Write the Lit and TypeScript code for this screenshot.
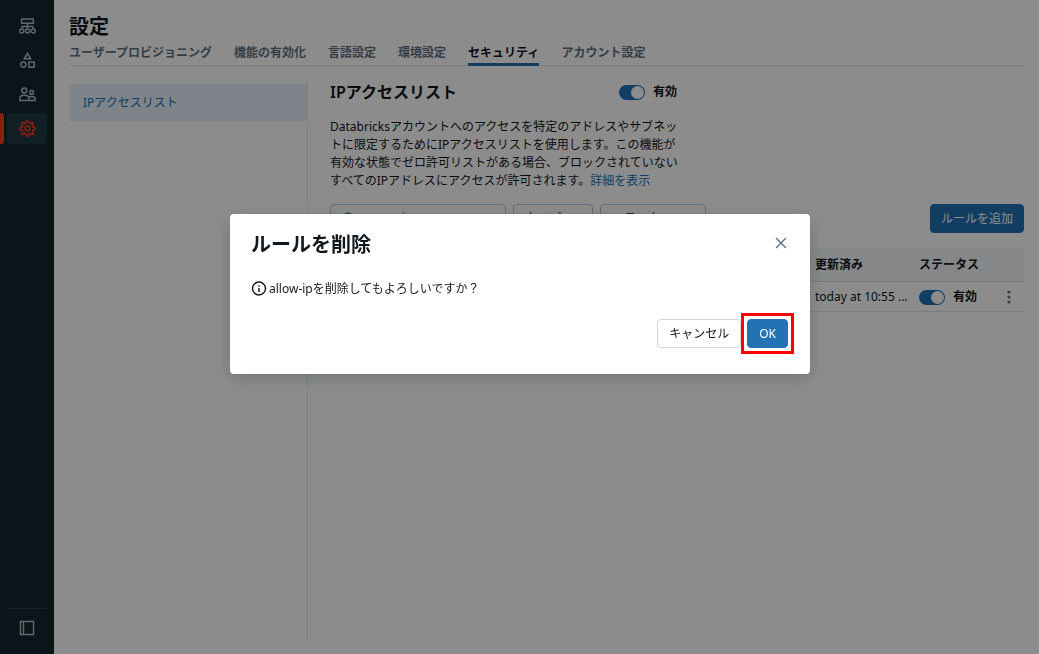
import { LitElement, html, css, svg } from "lit";
import { customElement, state } from "lit/decorators.js";

const TABS = ["ユーザープロビジョニング", "機能の有効化", "言語設定", "環境設定", "セキュリティ", "アカウント設定"];

const NAV = [
  {
    label: "ワークスペース",
    icon: svg`<path d="M2.500 1h11v4h-11zM8 5v5M3 10.200V8h10v2.200"/><circle cx="2.600" cy="12.200" r="1.900"/><circle cx="8" cy="12.200" r="1.900"/><circle cx="13.400" cy="12.200" r="1.900"/>`,
  },
  {
    label: "カタログ",
    icon: svg`<path d="M8 1.200l3 5.200H5zM9.300 9.300h5v5h-5z"/><circle cx="4.100" cy="11.800" r="2.500"/>`,
  },
  {
    label: "ユーザー",
    icon: svg`<circle cx="5" cy="4.200" r="2.300"/><circle cx="11.900" cy="6" r="1.700"/><path d="M.8 13.600v-2.200c0-1.600 1.800-2.600 4.200-2.600s4.200 1 4.200 2.600v2.200zM9.200 13.600h6v-1.400c0-1.400-1.300-2.300-3.200-2.300-1.300 0-2.300.4-2.900 1"/>`,
  },
  {
    label: "設定",
    icon: svg`<path stroke-linejoin="round" d="M6.630 2.890 6.960.870 9.040.870 9.370 2.890 10.650 3.410 12.310 2.220 13.780 3.690 12.590 5.350 13.110 6.630 15.130 6.960 15.130 9.040 13.110 9.370 12.590 10.650 13.780 12.310 12.310 13.780 10.650 12.590 9.370 13.110 9.040 15.130 6.960 15.130 6.630 13.110 5.350 12.590 3.690 13.780 2.220 12.310 3.410 10.650 2.890 9.370.870 9.040.870 6.960 2.890 6.630 3.410 5.350 2.220 3.690 3.690 2.220 5.350 3.410z"/><circle cx="8" cy="8" r="2.300"/>`,
  },
];

@customElement("toggle-switch")
class ToggleSwitch extends LitElement {
  static styles = css`
    :host { display: flex; }
    label { display: flex; align-items: center; gap: 8px; font-weight: 600; font-size: 12px; line-height: 18px; }
    input {
      appearance: none; box-sizing: border-box; margin: 0; width: 26px; height: 15px; border-radius: 8px;
      background: #2272b4; display: flex; justify-content: flex-end; padding: 1px;
    }
    input::before { content: ""; width: 13px; height: 13px; border-radius: 50%; background: #fff; }
    input:not(:checked) { justify-content: flex-start; background: #8396a5; }
  `;
  render() {
    return html`<label><input type="checkbox" role="switch" checked />有効</label>`;
  }
}

@customElement("app-root")
class AppRoot extends LitElement {
  @state() private open = true;

  static styles = css`
    :host {
      display: block; font-family: "Noto Sans", "Noto Sans CJK JP", sans-serif;
      font-size: 12px; line-height: 18px; color: #11171c; background: #fff;
    }
    * { box-sizing: border-box; }
    button, input { font: inherit; color: inherit; }
    button { cursor: pointer; }
    h1, h2, p { margin: 0; }
    a { text-decoration: none; color: #2272b4; }
    svg { fill: none; stroke: currentColor; stroke-width: 1.4; display: block; }
    .page { display: flex; min-height: 100vh; }
    .side {
      flex: none; width: 54px; background: #11272e; color: #b4bec4; padding: 11px 7px 18px;
      display: flex; flex-direction: column; gap: 3px;
    }
    .item { display: grid; grid-template-columns: 4px 1fr; gap: 3px; margin-left: -7px; }
    .mark { border-radius: 0 3px 3px 0; }
    .nav { height: 31px; border-radius: 4px; display: grid; place-items: center; color: inherit; }
    .item.on .nav { background: #223a42; color: #ff3621; }
    .item.on .mark { background: #ff3621; }
    .foot { margin-top: auto; border-top: 1px solid #344346; padding-top: 11px; }
    .collapse { border: 0; background: none; padding: 0; width: 100%; display: grid; place-items: center; }
    .main { flex: 1; min-width: 0; padding: 15px 15px 14px; display: flex; flex-direction: column; }
    h1 { font-size: 20px; line-height: 24px; font-weight: 600; }
    .tabs { display: flex; gap: 22px; border-bottom: 1px solid #e0e6ea; margin-top: 5px; }
    .tab { color: #5f7281; font-weight: 600; height: 22px; margin-bottom: -1px; white-space: nowrap; }
    .tab.on { color: #11171c; border-bottom: 3px solid #2272b4; }
    .body { flex: 1; display: flex; margin-top: 14px; }
    .menu { width: 239px; flex: none; border-right: 1px solid #e8ecf0; padding-top: 4px; }
    .menu a { display: block; background: #e6f1f9; padding: 10px 14px 9px; }
    .content { flex: 1; min-width: 0; padding-left: 22px; }
    .head { display: flex; justify-content: space-between; align-items: center; width: 347px; }
    h2 { font-size: 16px; line-height: 24px; font-weight: 600; }
    .desc { max-width: 352px; margin-top: 14px; }
    .tools { display: flex; gap: 7px; margin-top: 14px; }
    .search {
      width: 176px; display: flex; align-items: center; gap: 6px; padding: 0 11px;
      border: 1px solid #b9cbdb; border-radius: 4px; height: 29px; color: #5f7281;
    }
    .search svg { flex: none; }
    .search input { border: 0; background: none; padding: 0; width: 100%; min-width: 0; outline: 0; }
    .search input::placeholder { color: #5f7281; opacity: 1; }
    .btn { height: 29px; border-radius: 4px; padding: 1px 11px 0; border: 1px solid #cbd8e3; background: #fff; white-space: nowrap; }
    .btn.primary { background: #2272b4; border-color: #2272b4; color: #fff; }
    .filter { display: flex; align-items: center; justify-content: space-between; border-color: #b9cbdb; }
    .type { width: 80px; }
    .status { width: 106px; }
    .add { margin-left: auto; padding: 1px 10px 0; }
    table { width: 100%; border-collapse: collapse; table-layout: fixed; margin-top: 15px; }
    th { text-align: left; height: 33px; background: #f4f7fa; font-weight: 600; padding: 2px 0 0; }
    td { height: 30px; padding: 2px 0 0; white-space: nowrap; }
    th, td { border-bottom: 1px solid #dce3e9; }
    .c2 { width: 104px; }
    .c3 { width: 83px; }
    .c4 { width: 22px; }
    .more { border: 0; background: none; padding: 0; color: #5f7281; display: block; }
    .more svg { fill: currentColor; stroke: none; }
    .mask { position: fixed; inset: 0; background: rgba(0, 0, 0, 0.45); padding: 214px 0 0 1px; }
    .modal {
      width: 580px; max-width: 100%; margin: 0 auto; background: #fff; border-radius: 4px;
      padding: 19px 22px 20px 21px; box-shadow: 0 4px 16px rgba(27, 49, 57, 0.25);
    }
    .mhead { display: flex; justify-content: space-between; align-items: flex-start; }
    .mhead h2 { font-size: 20px; }
    .close { border: 0; background: none; padding: 3px 0; color: #5f7281; }
    .msg { display: flex; align-items: center; gap: 2px; margin-top: 23px; }
    .acts { display: flex; justify-content: flex-end; align-items: center; margin: 15px -6px 0 0; }
    .ring { border: 3px solid #ff0000; padding: 3px; }
    .ring .btn { display: block; }
  `;

  render() {
    return html`
      <div class="page">
        <nav class="side">
          ${NAV.map((n, i) => html`<div class="item ${i === 3 ? "on" : ""}">
            <span class="mark"></span>
            <a class="nav" href="#" aria-label=${n.label}>
              <svg width="17" height="17" viewBox="0 0 16 16">${n.icon}</svg>
            </a>
          </div>`)}
          <div class="foot">
            <button class="collapse" aria-label="メニュー">
              <svg width="16" height="16" viewBox="0 0 16 16"><path d="M1.500 1.500h13v13h-13zM4.500 1.500v13"/></svg>
            </button>
          </div>
        </nav>
        <main class="main">
          <h1>設定</h1>
          <nav class="tabs">${TABS.map((t, i) => html`<a class="tab ${i === 4 ? "on" : ""}" href="#">${t}</a>`)}</nav>
          <div class="body">
            <nav class="menu"><a href="#">IPアクセスリスト</a></nav>
            <section class="content">
              <div class="head"><h2>IPアクセスリスト</h2><toggle-switch></toggle-switch></div>
              <p class="desc">Databricksアカウントへのアクセスを特定のアドレスやサブネットに限定するためにIPアクセスリストを使用します。この機能が有効な状態でゼロ許可リストがある場合、ブロックされていないすべてのIPアドレスにアクセスが許可されます。<a href="#">詳細を表示</a></p>
              <div class="tools">
                <label class="search">
                  <svg width="14" height="14" viewBox="0 0 14 14"><circle cx="6" cy="5.500" r="4.500"/><path d="M9.500 9l3.500 3.500"/></svg>
                  <input type="text" aria-label="フィルタ" placeholder="フィルタ" />
                </label>
                <button class="btn filter type">タイプ<svg width="10" height="10" viewBox="0 0 10 10"><path d="M1 3l4 4 4-4"/></svg></button>
                <button class="btn filter status">ステータス<svg width="10" height="10" viewBox="0 0 10 10"><path d="M1 3l4 4 4-4"/></svg></button>
                <button class="btn primary add">ルールを追加</button>
              </div>
              <table>
                <thead><tr><th></th><th class="c2">更新済み</th><th class="c3">ステータス</th><th class="c4"></th></tr></thead>
                <tbody><tr>
                  <td></td><td>today at 10:55 ...</td><td><toggle-switch></toggle-switch></td>
                  <td><button class="more" aria-label="メニュー"><svg width="14" height="14" viewBox="0 0 14 14"><circle cx="7" cy="2" r="1.600"/><circle cx="7" cy="7" r="1.600"/><circle cx="7" cy="12" r="1.600"/></svg></button></td>
                </tr></tbody>
              </table>
            </section>
          </div>
        </main>
      </div>
      ${this.open ? html`<div class="mask">
        <div class="modal" role="dialog" aria-modal="true" aria-labelledby="dialog-title">
          <div class="mhead"><h2 id="dialog-title">ルールを削除</h2>
            <button class="close" aria-label="閉じる" @click=${() => (this.open = false)}>
              <svg width="14" height="14" viewBox="0 0 14 14"><path d="M2 2l10 10M12 2L2 12"/></svg></button></div>
          <p class="msg">
            <svg width="16" height="16" viewBox="0 0 16 16"><circle cx="8" cy="7.500" r="6.500"/><path d="M8 7v4M8 4.300v1.500"/></svg>
            <span>allow-ipを削除してもよろしいですか？</span></p>
          <div class="acts">
            <button class="btn" @click=${() => (this.open = false)}>キャンセル</button>
            <span class="ring"><button class="btn primary" @click=${() => (this.open = false)}>OK</button></span>
          </div>
        </div>
      </div>` : ""}
    `;
  }
}
